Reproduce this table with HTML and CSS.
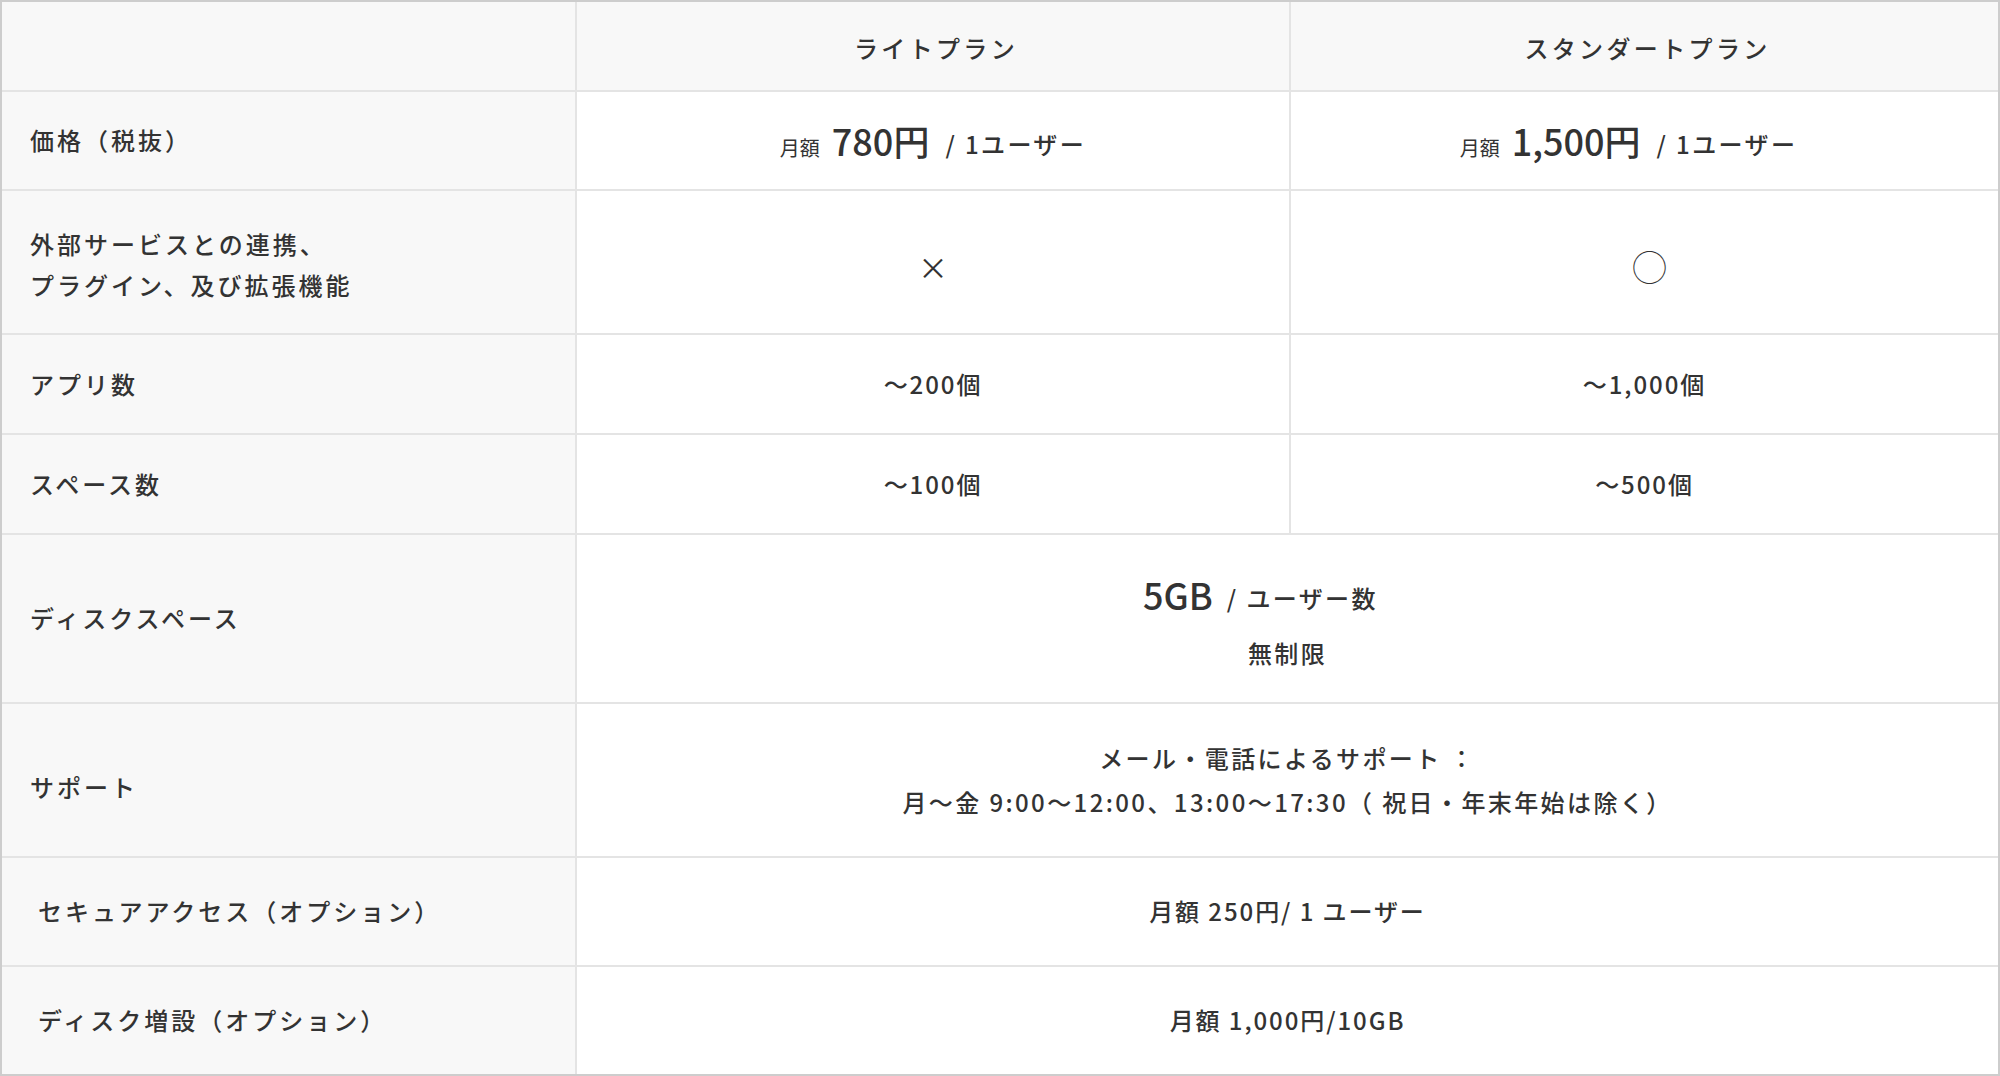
FILE: index.html
```html
<!DOCTYPE html>
<html lang="ja">
<head>
<meta charset="utf-8">
<title>料金プラン比較</title>
<link rel="stylesheet" href="styles.css">
</head>
<body>
<div class="plan-table">
  <div class="cell head label"></div>
  <div class="cell head plan">ライトプラン</div>
  <div class="cell head plan">スタンダートプラン</div>

  <div class="cell label">価格（税抜）</div>
  <div class="cell value"><p class="price"><span class="unit">月額</span><span class="big">780円</span><span class="per">/ 1ユーザー</span></p></div>
  <div class="cell value"><p class="price price--shift"><span class="unit">月額</span><span class="big">1,500円</span><span class="per">/ 1ユーザー</span></p></div>

  <div class="cell label label--two">外部サービスとの連携、<br>プラグイン、及び拡張機能</div>
  <div class="cell value mark"><span class="mark-cross">×</span></div>
  <div class="cell value mark"><span class="mark-circle">◯</span></div>

  <div class="cell label">アプリ数</div>
  <div class="cell value">〜200個</div>
  <div class="cell value">〜1,000個</div>

  <div class="cell label">スペース数</div>
  <div class="cell value">〜100個</div>
  <div class="cell value">〜500個</div>

  <div class="cell label">ディスクスペース</div>
  <div class="cell value wide disk">
    <p class="disk-line"><span class="big">5GB</span><span class="per">/ ユーザー数</span></p>
    <p class="disk-sub">無制限</p>
  </div>

  <div class="cell label label--low">サポート</div>
  <div class="cell value wide support">メール・電話によるサポート ：<br>月〜金 9:00〜12:00、13:00〜17:30（ 祝日・年末年始は除く）</div>

  <div class="cell label label--indent">セキュアアクセス（オプション）</div>
  <div class="cell value wide">月額 250円/ 1 ユーザー</div>

  <div class="cell label label--indent">ディスク増設（オプション）</div>
  <div class="cell value wide">月額 1,000円/10GB</div>
</div>
</body>
</html>
```

FILE: styles.css
```css
* {
  box-sizing: border-box;
}

html, body {
  margin: 0;
  padding: 0;
  background: #ffffff;
}

body {
  font-family: "Noto Sans CJK JP", "Noto Sans", sans-serif;
  color: #333333;
  font-size: 24px;
  font-weight: 500;
  letter-spacing: 0.1em;
}

p {
  margin: 0;
}

.plan-table {
  width: 2000px;
  height: 1076px;
  display: grid;
  grid-template-columns: 573px 712px 1fr;
  grid-template-rows: 88px 97px 142px 98px 98px 167px 152px 107px 107px;
  gap: 2px;
  border: 2px solid #cdcdcd;
  background: #e4e4e4;
}

.cell {
  display: flex;
  align-items: center;
  background: #ffffff;
  line-height: 1.7;
}

.head {
  background: #f8f8f8;
  padding-top: 4px;
}

.label {
  background: #f8f8f8;
  padding-left: 28px;
  letter-spacing: 0.125em;
}

.label--two {
  padding-top: 5px;
}

.label--low {
  padding-top: 14px;
}

.label--indent {
  padding-left: 36px;
}

.plan,
.value {
  justify-content: center;
  text-align: center;
}

.value {
  letter-spacing: 0.08em;
}

.plan {
  letter-spacing: 0.14em;
  padding-left: 6px;
}

.wide {
  grid-column: span 2;
}

.price {
  padding-top: 4px;
  white-space: nowrap;
}

.price--shift {
  padding-right: 32px;
}

.unit {
  font-size: 20px;
  font-weight: 400;
  letter-spacing: 0;
  margin-right: 12px;
}

.big {
  font-size: 36px;
  font-weight: 500;
  letter-spacing: 0;
  line-height: 1.2;
}

.per {
  margin-left: 16px;
  vertical-align: 2px;
  letter-spacing: 0.1em;
}

.mark {
  padding-top: 8px;
}

.mark-cross {
  font-size: 30px;
  letter-spacing: 0;
  font-weight: 400;
}

.mark-circle {
  font-size: 35px;
  letter-spacing: 0;
  font-weight: 300;
  margin-left: 10px;
}

.disk {
  flex-direction: column;
  gap: 12px;
  padding-top: 10px;
}

.disk-line {
  padding-right: 54px;
  white-space: nowrap;
}

.disk-line .per {
  margin-left: 14px;
}

.disk-sub {
  letter-spacing: 0.1em;
}

.support {
  line-height: 44px;
  letter-spacing: 0.1em;
}
```
